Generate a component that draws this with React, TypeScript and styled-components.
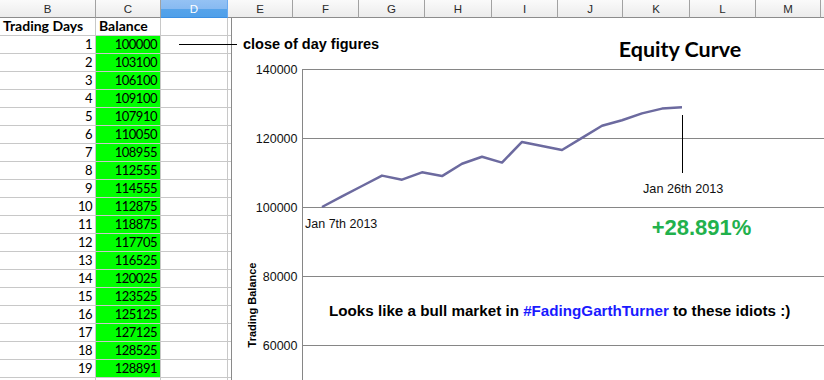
import * as React from 'react'
import styled, { createGlobalStyle } from 'styled-components'

const balances = [
  100000, 103100, 106100, 109100, 107910, 110050, 108955, 112555, 114555, 112875,
  118875, 117705, 116525, 120025, 123525, 125125, 127125, 128525, 128891,
]

const columns = [
  { id: 'B', width: 96 },
  { id: 'C', width: 65 },
  { id: 'D', width: 67 },
  { id: 'E', width: 65 },
  { id: 'F', width: 66 },
  { id: 'G', width: 66 },
  { id: 'H', width: 67 },
  { id: 'I', width: 66 },
  { id: 'J', width: 65 },
  { id: 'K', width: 67 },
  { id: 'L', width: 66 },
  { id: 'M', width: 65 },
  { id: '', width: 0 },
]

// chart geometry, in page pixels
const plotLeft = 302
const yFor = (v: number) => 207 - ((v - 100000) * 69) / 20000
const xFor = (i: number) => 322 + i * 20
const ticks = [140000, 120000, 100000, 80000, 60000]
const sans = "'Liberation Sans', Arial, sans-serif"

const EquityChart = () => {
  const points = balances.map((v, i) => `${xFor(i)},${yFor(v).toFixed(1)}`).join(' ')
  return (
    <svg width="592" height="362" viewBox="232 18 592 362">
      {ticks.map((t) => (
        <g key={t}>
          <line x1={plotLeft} x2={824} y1={yFor(t) + 0.5} y2={yFor(t) + 0.5} stroke="#868686" />
          <text x={297.5} y={yFor(t) + 5} textAnchor="end" fontFamily={sans} fontSize="12.5" fill="#111">
            {t}
          </text>
        </g>
      ))}
      <line x1={plotLeft + 0.5} x2={plotLeft + 0.5} y1={69} y2={380} stroke="#868686" />
      <polyline points={points} fill="none" stroke="#6c6a9f" strokeWidth="2.5" strokeLinejoin="round" />
      <line x1={682.5} x2={682.5} y1={115} y2={173} stroke="#000" />

      <text x={305} y={228} fontFamily={sans} fontSize="12.5" fill="#111">Jan 7th 2013</text>
      <text x={643} y={193} fontFamily={sans} fontSize="12.7" fill="#111">Jan 26th 2013</text>

      <text x={680} y={57} textAnchor="middle" fontFamily="Lato, 'Open Sans', sans-serif" fontWeight="700" fontSize="21.5" fill="#000">
        Equity Curve
      </text>
      <text x={701.5} y={234.5} textAnchor="middle" fontFamily={sans} fontWeight="700" fontSize="22" fill="#22b14c">
        +28.891%
      </text>
      <text x={329} y={316} fontFamily={sans} fontWeight="700" fontSize="15.2" fill="#000">
        Looks like a bull market in <tspan fill="#1a1aff">#FadingGarthTurner</tspan> to these idiots :)
      </text>
      <text transform="translate(256 305) rotate(-90)" textAnchor="middle" fontFamily={sans} fontWeight="700" fontSize="11" fill="#000">
        Trading Balance
      </text>
    </svg>
  )
}

const App = () => {
  const empty = columns.slice(2)
  return (
    <>
      <GlobalStyle />
      <Sheet>
        <Grid>
          {columns.map((c) => (
            <ColHeader key={c.id || 'end'} $active={c.id === 'D'}>
              {c.id}
            </ColHeader>
          ))}

          <Cell $bold>Trading Days</Cell>
          <Cell $bold>Balance</Cell>
          {empty.map((c) => (
            <Cell key={'h' + c.id} />
          ))}

          {balances.map((b, i) => (
            <React.Fragment key={i}>
              <Cell $num>{i + 1}</Cell>
              <Cell $num $fill="#00ff00">{b}</Cell>
              {empty.map((c) => (
                <Cell key={c.id} />
              ))}
            </React.Fragment>
          ))}

          {columns.map((c) => (
            <Cell key={'t' + c.id} />
          ))}
        </Grid>

        <ChartPanel>
          <EquityChart />
        </ChartPanel>

        <Callout>
          <Leader />
          <CalloutText>close of day figures</CalloutText>
        </Callout>
      </Sheet>
    </>
  )
}

export default App

// Styles
const GlobalStyle = createGlobalStyle`
  html, body {
    margin: 0;
    padding: 0;
    background: #fff;
    overflow: hidden;
  }
`

const Sheet = styled.div`
  position: relative;
  width: 824px;
  height: 380px;
  overflow: hidden;
  background: #fff;
`

const Grid = styled.div`
  display: grid;
  grid-template-columns: ${columns.map((c) => (c.width ? `${c.width}px` : '1fr')).join(' ')};
  grid-auto-rows: 18px;
`

const ColHeader = styled.div<{ $active?: boolean }>`
  box-sizing: border-box;
  display: flex;
  align-items: center;
  justify-content: center;
  font-family: 'Liberation Sans', Arial, sans-serif;
  font-size: 11.5px;
  color: ${(p) => (p.$active ? '#fff' : '#2a2a2a')};
  background: ${(p) =>
    p.$active
      ? 'linear-gradient(#94c2f4 0%, #88baf1 50%, #55a3ea 56%, #4f9fe9 100%)'
      : 'linear-gradient(#fafafa, #ececec)'};
  border-right: 1px solid ${(p) => (p.$active ? '#6aaaf0' : '#a2a2a2')};
  border-bottom: 1px solid ${(p) => (p.$active ? '#3c8fe2' : '#8c8c8c')};
`

const Cell = styled.div<{ $bold?: boolean; $num?: boolean; $fill?: string }>`
  box-sizing: border-box;
  display: flex;
  align-items: flex-end;
  justify-content: ${(p) => (p.$num ? 'flex-end' : 'flex-start')};
  padding: 0 3px 1px 3px;
  font-family: Lato, 'Open Sans', sans-serif;
  font-size: ${(p) => (p.$num ? '13px' : '14px')};
  letter-spacing: ${(p) => (p.$num ? '-0.5px' : '0')};
  font-weight: ${(p) => (p.$bold ? 700 : 400)};
  line-height: 16px;
  color: #000;
  white-space: nowrap;
  background: ${(p) => p.$fill || '#fff'};
  border-right: 1px solid #c8c8c8;
  border-bottom: 1px solid #c8c8c8;
`

const ChartPanel = styled.div`
  position: absolute;
  left: 231px;
  top: 18px;
  right: 0;
  bottom: 0;
  background: #fff;
  border-left: 1px solid #8a8a8a;

  svg {
    display: block;
  }
`

const Callout = styled.div`
  position: absolute;
  left: 179px;
  top: 35px;
  height: 18px;
  display: flex;
  align-items: center;
  gap: 6px;
`

const Leader = styled.div`
  width: 58px;
  height: 1px;
  background: #000;
`

const CalloutText = styled.span`
  font-family: 'Liberation Sans', Arial, sans-serif;
  font-weight: 700;
  font-size: 14.5px;
  color: #000;
  white-space: nowrap;
`
